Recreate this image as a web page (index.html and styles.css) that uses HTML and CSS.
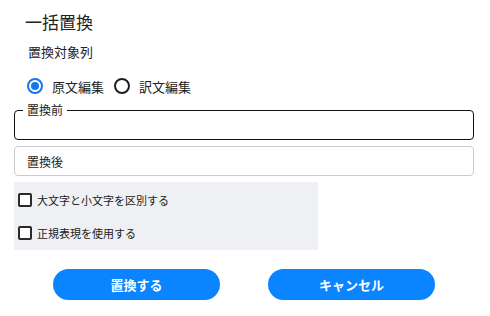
FILE: index.html
```html
<!DOCTYPE html>
<html lang="ja">
<head>
<meta charset="utf-8">
<link rel="stylesheet" href="styles.css">
</head>
<body>
<div class="dialog">
  <h1 class="title">一括置換</h1>
  <div class="section-label">置換対象列</div>
  <div class="radios">
    <label class="radio-item"><input type="radio" name="col" checked><span>原文編集</span></label>
    <label class="radio-item"><input type="radio" name="col"><span>訳文編集</span></label>
  </div>
  <fieldset class="field-before">
    <legend>置換前</legend>
    <input type="text" class="plain-input">
  </fieldset>
  <div class="field-after"><input type="text" class="plain-input" placeholder="置換後"></div>
  <div class="options">
    <label class="check-row"><input type="checkbox"><span>大文字と小文字を区別する</span></label>
    <label class="check-row"><input type="checkbox"><span>正規表現を使用する</span></label>
  </div>
  <div class="actions">
    <button class="btn">置換する</button>
    <button class="btn">キャンセル</button>
  </div>
</div>
</body>
</html>
```
FILE: styles.css
```css
* { box-sizing: border-box; }
html, body { margin: 0; padding: 0; background: #fff; }
body {
  font-family: "Noto Sans CJK JP", "Noto Sans", sans-serif;
  color: #222;
}
.dialog {
  width: 490px;
  padding: 10px 16px 0 14px;
}
.title {
  margin: 0;
  padding-left: 11px;
  font-size: 17px;
  font-weight: 400;
  line-height: 24px;
  color: #222;
}
.section-label {
  margin-top: 9px;
  padding-left: 14px;
  font-size: 13px;
  line-height: 18px;
}
.radios {
  margin-top: 15px;
  padding-left: 13px;
  display: flex;
  align-items: center;
  height: 20px;
  font-size: 13px;
}
.radio-item {
  display: flex;
  align-items: center;
  gap: 9px;
  margin-right: 10px;
}
.radio-item input {
  appearance: none;
  -webkit-appearance: none;
  margin: 0;
  width: 16px;
  height: 16px;
  border: 2px solid #1f1f1f;
  border-radius: 50%;
  background: #fff;
  display: grid;
  place-items: center;
}
.radio-item input:checked {
  border-color: #1677e6;
}
.radio-item input:checked::after {
  content: "";
  width: 8px;
  height: 8px;
  border-radius: 50%;
  background: #1677e6;
}
.field-before {
  margin: 6px 0 0;
  padding: 0 8px;
  border: 1px solid #111;
  border-radius: 4px;
  height: 38px;
}
.field-before legend {
  margin-left: 0;
  padding: 0 4px;
  font-size: 12px;
  line-height: 16px;
}
.plain-input {
  width: 100%;
  border: none;
  outline: none;
  background: transparent;
  font-family: inherit;
  font-size: 12px;
  color: #222;
  padding: 0;
}
.field-before .plain-input { height: 20px; }
.field-after {
  margin-top: 6px;
  height: 30px;
  border: 1px solid #c9cdd2;
  border-radius: 4px;
  padding: 0 12px;
  display: flex;
  align-items: center;
}
.field-after .plain-input::placeholder { color: #222; opacity: 1; }
.options {
  margin-top: 6px;
  width: 304px;
  height: 68px;
  background: #eff0f3;
  padding: 1px 0 1px 4px;
}
.check-row {
  display: flex;
  align-items: center;
  gap: 5px;
  height: 33px;
  font-size: 11px;
}
.check-row input {
  appearance: none;
  -webkit-appearance: none;
  margin: 0;
  width: 14px;
  height: 14px;
  border: 2px solid #2a2a2a;
  border-radius: 2px;
  background: #fff;
}
.actions {
  margin-top: 19px;
  display: flex;
  justify-content: center;
  gap: 48px;
}
.btn {
  width: 167px;
  height: 31px;
  border: none;
  border-radius: 16px;
  background: #0a84ff;
  color: #fff;
  font-family: inherit;
  font-size: 13px;
  font-weight: 700;
  padding: 0;
}
```
